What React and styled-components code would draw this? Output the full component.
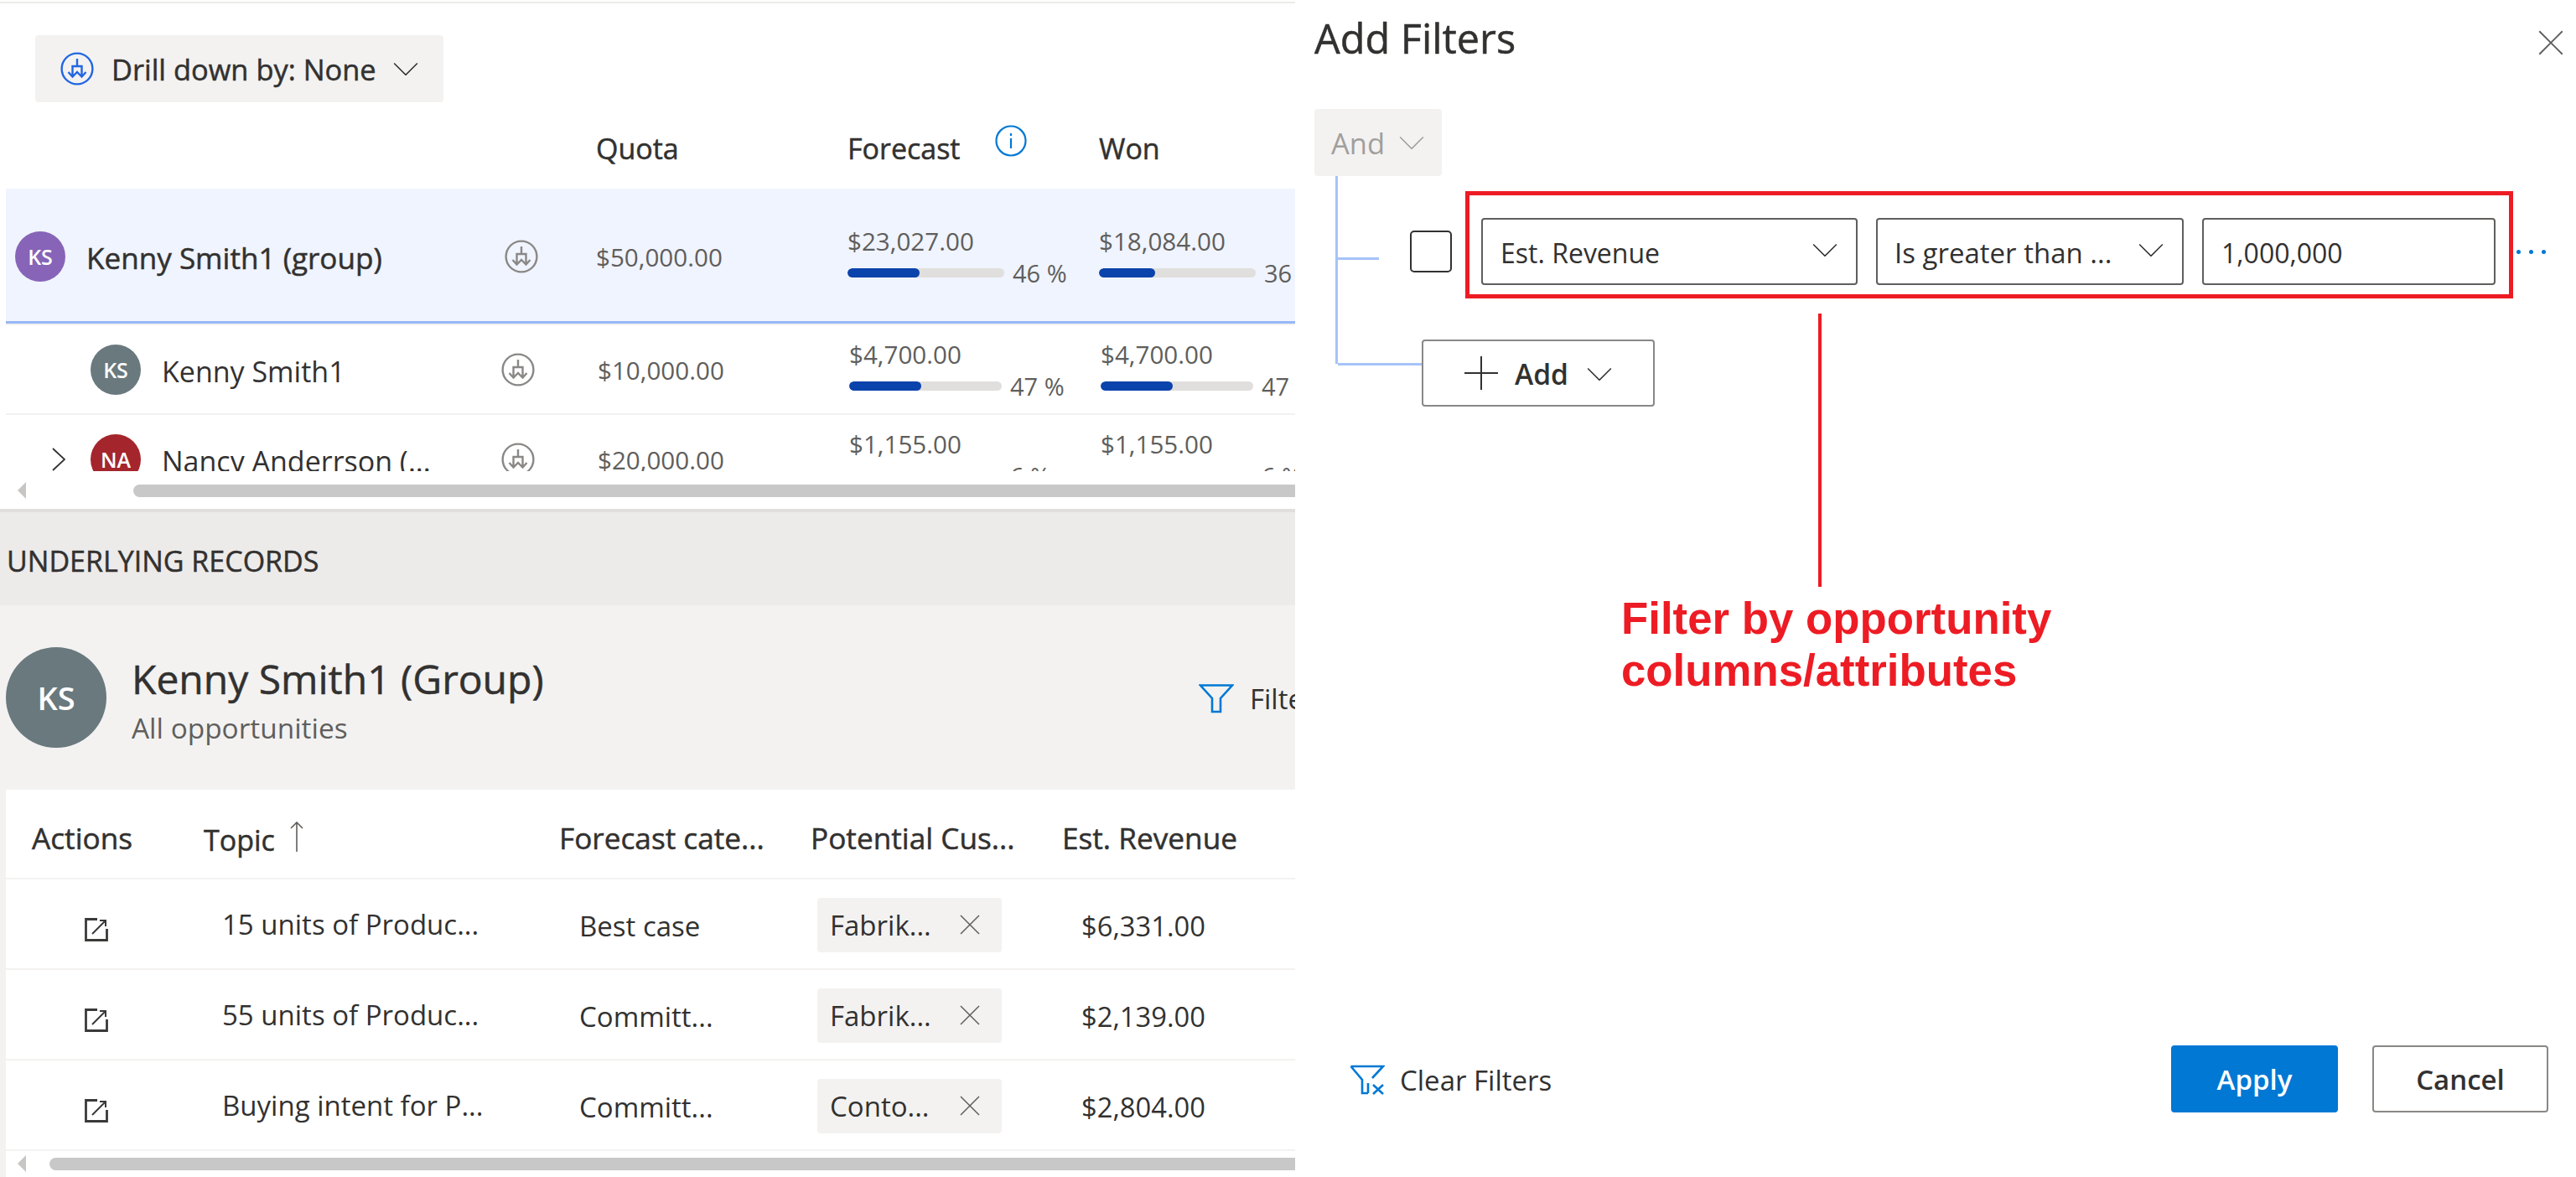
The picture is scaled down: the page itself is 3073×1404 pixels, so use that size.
import React from "react";
import styled, { createGlobalStyle, css } from "styled-components";

const medium = css`
  -webkit-text-stroke: 0.5px currentColor;
`;

const Global = createGlobalStyle`
  html, body { margin: 0; padding: 0; width: 3073px; height: 1404px; overflow: hidden; background: #fff; }
  body { font-family: "Open Sans", "Noto Sans", sans-serif; color: #323130; }
  * { box-sizing: border-box; }
`;

const Page = styled.div`
  display: grid;
  grid-template-columns: 1545px 1528px;
  width: 3073px;
  height: 1404px;
  overflow: hidden;
`;

const LeftPane = styled.div`
  display: flex;
  flex-direction: column;
  height: 1404px;
  overflow: hidden;
  padding-top: 2px;
`;

const Toolbar = styled.div`
  border-top: 2px solid #edebe9;
  height: 223px;
  flex: none;
  padding: 38px 0 0 42px;
`;

const DrillButton = styled.div`
  display: inline-flex;
  align-items: center;
  width: 487px;
  height: 80px;
  background: #f3f2f1;
  border-radius: 4px;
  padding-left: 30px;
  font-size: 34.4px;
  ${medium}
  svg.drill { margin-right: 21px; flex: none; }
  svg.chev { margin-left: 20px; flex: none; }
`;

const ColumnHeader = styled.div`
  display: grid;
  grid-template-columns: 704px 300px 300px 234px;
  margin: 35px 0 0 -35px;
  font-size: 34px;
  line-height: 40px;
  ${medium}
`;

const HeaderCell = styled.div`
  display: flex;
  align-items: flex-start;
  gap: 41px;
`;

const RowsViewport = styled.div`
  height: 337px;
  flex: none;
  overflow: hidden;
  margin-left: 7px;
`;

const TreeRow = styled.div`
  display: grid;
  grid-template-columns: ${(p) => (p.$group ? "704px 300px 300px 234px" : "706px 300px 300px 232px")};
  height: ${(p) => (p.$group ? "163px" : "107px")};
  align-items: center;
  background: ${(p) => (p.$group ? "#f0f4fe" : "#fff")};
  border-bottom: 2px solid #f3f2f1;
  ${(p) => p.$group && "box-shadow: inset 0 -3px 0 #97b8f6;"}
  overflow: hidden;
  flex: none;
`;

const NameCell = styled.div`
  display: flex;
  align-items: center;
  padding-left: ${(p) => p.$indent}px;
  height: 100%;
  svg.tree { margin-right: 30px; flex: none; }
`;

const Avatar = styled.div`
  flex: none;
  width: ${(p) => p.$size || 60}px;
  height: ${(p) => p.$size || 60}px;
  border-radius: 50%;
  background: ${(p) => p.$color};
  color: #fff;
  display: flex;
  align-items: center;
  justify-content: center;
  font-size: ${(p) => p.$font || 25}px;
  font-weight: 600;
`;

const Name = styled.div`
  margin-left: 25px;
  width: ${(p) => p.$width}px;
  font-size: ${(p) => (p.$strong ? 35.1 : 34)}px;
  ${(p) => p.$strong && medium}
  white-space: nowrap;
  flex: none;
  padding-top: ${(p) => (p.$strong ? 2 : 4)}px;
`;

const Money = styled.div`
  font-size: 29.6px;
  line-height: 40px;
  color: #605e5c;
  white-space: nowrap;
  padding-top: ${(p) => p.$nudge || 0}px;
`;

const ProgressCell = styled.div`
  display: flex;
  flex-direction: column;
  white-space: nowrap;
`;

const ProgressLine = styled.div`
  display: flex;
  align-items: center;
  gap: 10px;
  height: 36px;
  font-size: 29px;
  color: #605e5c;
`;

const Track = styled.div`
  width: ${(p) => p.$width}px;
  height: 11px;
  border-radius: 6px;
  background: #e1dfdd;
  overflow: hidden;
  flex: none;
`;

const Fill = styled.div`
  height: 100%;
  border-radius: 6px;
  background: #0a43ab;
`;

const ScrollRow = styled.div`
  display: flex;
  align-items: center;
  flex: none;
  height: 20px;
  margin-top: ${(p) => p.$top}px;
  padding-left: ${(p) => p.$left}px;
`;

const ScrollArrow = styled.div`
  width: 0;
  height: 0;
  border-top: 10px solid transparent;
  border-bottom: 10px solid transparent;
  border-right: 10px solid #c8c6c4;
  flex: none;
`;

const ScrollThumb = styled.div`
  margin-left: ${(p) => p.$offset}px;
  flex: 1;
  height: 15px;
  background: #c8c8c8;
  border-radius: 8px 0 0 8px;
`;

const SectionBar = styled.div`
  flex: none;
  margin-top: 12px;
  height: 115px;
  border-top: 4px solid #e1dfdd;
  background: #edebe9;
  display: flex;
  align-items: center;
  padding: 5px 0 0 8px;
  font-size: 34px;
  ${medium}
`;

const Summary = styled.div`
  flex: none;
  height: 220px;
  background: #f3f2f1;
  display: grid;
  grid-template-columns: 120px 1272px 200px;
  column-gap: 31px;
  align-items: center;
  padding-left: 7px;
  overflow: hidden;
`;

const SummaryTitle = styled.div`
  font-size: 48px;
  line-height: 60px;
  margin: 4px 0 0 -1px;
  ${medium}
`;

const SummarySub = styled.div`
  font-size: 33.4px;
  color: #605e5c;
  line-height: 42px;
  margin: 7px 0 0 -1px;
`;

const FilterLink = styled.div`
  display: flex;
  align-items: center;
  gap: 19px;
  font-size: 33px;
  margin-left: -31px;
  margin-top: 2px;
`;

const Card = styled.div`
  flex: 1;
  display: flex;
  flex-direction: column;
  background: #fff;
  margin-left: 7px;
  box-shadow: -7px 0 0 #f3f2f1;
`;

const RecordGrid = styled.div`
  display: grid;
  grid-template-columns: 205px 424px 300px 300px 1fr;
  padding-left: 31px;
  height: ${(p) => p.$height}px;
  border-bottom: 2px solid #f3f2f1;
  align-items: center;
  flex: none;
`;

const RecordHead = styled.div`
  font-size: ${(p) => p.$size || 35.2}px;
  white-space: nowrap;
  display: flex;
  align-items: center;
  margin-top: ${(p) => p.$top || 9}px;
  ${medium}
  svg { margin: -8px 0 0 18px; -webkit-text-stroke: 0; }
`;

const RecordCell = styled.div`
  padding-left: ${(p) => p.$left}px;
  font-size: ${(p) => p.$size || 33}px;
  white-space: nowrap;
  margin-top: ${(p) => p.$top || 0}px;
  display: flex;
  align-items: center;
`;

const Tag = styled.div`
  width: 220px;
  height: 65px;
  background: #f3f2f1;
  border-radius: 4px;
  display: flex;
  align-items: center;
  padding-left: 15px;
  font-size: 33px;
  margin-top: 2px;
  svg { margin-left: auto; margin-right: 26px; }
`;

const Panel = styled.div`
  position: relative;
  display: flex;
  flex-direction: column;
  padding-left: 23px;
  height: 1404px;
`;

const PanelHead = styled.div`
  display: flex;
  justify-content: space-between;
  align-items: center;
  height: 90px;
  padding-right: 15px;
  flex: none;
  svg { margin-top: 11px; }
`;

const PanelTitle = styled.div`
  font-size: 48.6px;
  ${medium}
`;

const AndButton = styled.div`
  margin-top: 40px;
  width: 152px;
  height: 80px;
  background: #f3f2f1;
  border-radius: 4px;
  display: flex;
  align-items: center;
  padding-left: 20px;
  gap: 17px;
  font-size: 34.5px;
  color: #a19f9d;
  flex: none;
`;

const Tree = styled.div`
  margin-left: 25px;
  height: 224px;
  border-left: 3px solid #a6c3f8;
  display: flex;
  flex-direction: column;
  flex: none;
`;

const ConditionRow = styled.div`
  display: flex;
  align-items: center;
  margin-top: 18px;
  flex: none;
`;

const Branch = styled.div`
  width: ${(p) => p.$width}px;
  height: 3px;
  background: #a6c3f8;
  flex: none;
  align-self: flex-start;
  margin-top: ${(p) => p.$top}px;
`;

const CheckBox = styled.div`
  width: 50px;
  height: 50px;
  margin: 16px 16px 0 37px;
  border: 2.5px solid #323130;
  border-radius: 5px;
  flex: none;
`;

const RedFrame = styled.div`
  width: 1250px;
  height: 128px;
  border: 5px solid #ed1c24;
  display: flex;
  gap: 22px;
  padding: 27px 0 0 14px;
  flex: none;
`;

const Field = styled.div`
  width: ${(p) => p.$width}px;
  height: 80px;
  border: 2px solid #605e5c;
  border-radius: 4px;
  display: flex;
  align-items: center;
  justify-content: space-between;
  padding: 2px 22px 0 ${(p) => p.$left || 21}px;
  font-size: ${(p) => p.$size || 32}px;
  white-space: nowrap;
  flex: none;
  svg { margin-top: -6px; }
`;

const Dots = styled.div`
  display: flex;
  gap: 10px;
  margin: 16px 0 0 4px;
  flex: none;
`;

const Dot = styled.span`
  width: 5px;
  height: 5px;
  border-radius: 50%;
  background: #0078d4;
`;

const AddRow = styled.div`
  display: flex;
  margin-top: 49px;
  flex: none;
`;

const AddButton = styled.div`
  width: 278px;
  height: 80px;
  border: 2px solid #8a8886;
  border-radius: 4px;
  display: flex;
  align-items: center;
  padding: 2px 0 0 49px;
  font-size: 33.6px;
  font-weight: 600;
  flex: none;
  svg.chev { margin-left: 22px; }
  svg.plus { margin-right: 20px; margin-top: -2px; }
`;

const Footer = styled.div`
  margin-top: auto;
  margin-bottom: 77px;
  display: flex;
  align-items: center;
  padding: 0 33px 0 42px;
  flex: none;
`;

const ClearFilters = styled.div`
  display: flex;
  align-items: center;
  gap: 18px;
  font-size: 33px;
  margin-right: auto;
  padding-top: 2px;
`;

const ActionButton = styled.div`
  height: 80px;
  width: ${(p) => p.$width}px;
  display: flex;
  align-items: center;
  justify-content: center;
  border-radius: 4px;
  font-size: 33px;
  font-weight: 600;
  margin-left: ${(p) => p.$gap || 0}px;
  background: ${(p) => (p.$primary ? "#0078d4" : "#fff")};
  color: ${(p) => (p.$primary ? "#fff" : "#323130")};
  border: ${(p) => (p.$primary ? "none" : "2px solid #8a8886")};
`;

const Callout = styled.div`
  position: absolute;
  left: 389px;
  top: 374px;
  display: flex;
  flex-direction: column;
`;

const CalloutLine = styled.div`
  width: 4px;
  height: 326px;
  margin-left: 235px;
  background: #ed1c24;
`;

const CalloutText = styled.div`
  font-family: "Liberation Sans", Arial, sans-serif;
  font-weight: 700;
  font-size: 52.8px;
  line-height: 62px;
  color: #ed1c24;
  white-space: nowrap;
  margin-top: 7px;
`;

const Chevron = ({ size = 30, color = "#323130", className = "chev" }) => (
  <svg className={className} width={size} height={size * 0.56} viewBox="0 0 30 17" fill="none">
    <path d="M1 1.5 L15 15.5 L29 1.5" stroke={color} strokeWidth="1.6" />
  </svg>
);

const DrillIcon = ({ color = "#2266e3", size = 40, className = "drill" }) => (
  <svg className={className} width={size} height={size} viewBox="0 0 40 40" fill="none" stroke={color} strokeWidth="2.4">
    <circle cx="20" cy="20" r="18.4" />
    <path d="M20 8 V17 M14.5 29 V17 H25.5 V29 M9.5 24 L14.5 29.5 L20 24 L25.5 29.5 L30.5 24" strokeWidth="2.4" />
  </svg>
);

const InfoIcon = () => (
  <svg width="38" height="38" viewBox="0 0 38 38" fill="none" stroke="#0078d4" strokeWidth="2.2" style={{ marginTop: -8 }}>
    <circle cx="19" cy="19" r="17.5" />
    <path d="M19 16 V28 M19 10 V13" />
  </svg>
);

const FunnelIcon = () => (
  <svg width="42" height="36" viewBox="0 0 42 36" fill="none" stroke="#0078d4" strokeWidth="2.6">
    <path d="M2 2.5 H40 L26 18 V34 H16 V18 Z" />
  </svg>
);

const ClearFunnelIcon = () => (
  <svg width="42" height="36" viewBox="0 0 42 36" fill="none" stroke="#0078d4" strokeWidth="2.6">
    <path d="M1.5 2 H40 L27 16 M22 34 H15 V18 L1.5 2 M22 34 V22" />
    <path d="M28 24 L40 35 M40 24 L28 35" />
  </svg>
);

const OpenIcon = () => (
  <svg width="28" height="28" viewBox="0 0 28 28" fill="none" stroke="#3b3a39" strokeWidth="2.8">
    <path d="M15 1.5 H1.5 V26.5 H26.5 V13" />
    <path d="M9 19 L24 4 M18 3 H25 V10" strokeWidth="2" />
  </svg>
);

const CloseIcon = ({ size = 24, color = "#605e5c" }) => (
  <svg width={size} height={size} viewBox="0 0 24 24" fill="none" stroke={color} strokeWidth={1.5}>
    <path d="M1 1 L23 23 M23 1 L1 23" />
  </svg>
);

const SubChevron = () => (
  <svg className="tree" width="16" height="28" viewBox="0 0 16 28" fill="none" stroke="#323130" strokeWidth="1.8">
    <path d="M1 1 L15 14 L1 27" />
  </svg>
);

const Progress = ({ amount, fill, width, label }) => (
  <ProgressCell>
    <Money>{amount}</Money>
    <ProgressLine>
      <Track $width={width}>
        <Fill style={{ width: `${fill}%` }} />
      </Track>
      {label}
    </ProgressLine>
  </ProgressCell>
);

const records = [
  { topic: "15 units of Produc...", cat: "Best case", tag: "Fabrik...", rev: "$6,331.00" },
  { topic: "55 units of Produc...", cat: "Committ...", tag: "Fabrik...", rev: "$2,139.00" },
  { topic: "Buying intent for P...", cat: "Committ...", tag: "Conto...", rev: "$2,804.00" },
];

export default function App() {
  return (
    <Page>
      <Global />
      <LeftPane>
        <Toolbar>
          <DrillButton>
            <DrillIcon />
            Drill down by: None
            <Chevron />
          </DrillButton>
          <ColumnHeader>
            <div />
            <div>Quota</div>
            <HeaderCell>
              Forecast <InfoIcon />
            </HeaderCell>
            <div>Won</div>
          </ColumnHeader>
        </Toolbar>
        <RowsViewport>
          <TreeRow $group>
            <NameCell $indent={11}>
              <Avatar $color="#8764b8">KS</Avatar>
              <Name $strong $width={499}>Kenny Smith1 (group)</Name>
              <DrillIcon color="#8a8886" className="tree" />
            </NameCell>
            <Money $nudge={3}>$50,000.00</Money>
            <Progress amount="$23,027.00" fill={46} width={187} label="46 %" />
            <Progress amount="$18,084.00" fill={36} width={187} label="36 %" />
          </TreeRow>
          <TreeRow>
            <NameCell $indent={101}>
              <Avatar $color="#69797e">KS</Avatar>
              <Name $width={405}>Kenny Smith1</Name>
              <DrillIcon color="#8a8886" className="tree" />
            </NameCell>
            <Money $nudge={3}>$10,000.00</Money>
            <Progress amount="$4,700.00" fill={47} width={182} label="47 %" />
            <Progress amount="$4,700.00" fill={47} width={182} label="47 %" />
          </TreeRow>
          <TreeRow>
            <NameCell $indent={55}>
              <SubChevron />
              <Avatar $color="#a4262c">NA</Avatar>
              <Name $width={405}>Nancy Anderrson (...</Name>
              <DrillIcon color="#8a8886" className="tree" />
            </NameCell>
            <Money $nudge={3}>$20,000.00</Money>
            <Progress amount="$1,155.00" fill={6} width={182} label="6 %" />
            <Progress amount="$1,155.00" fill={6} width={182} label="6 %" />
          </TreeRow>
        </RowsViewport>
        <ScrollRow $top={13} $left={21}>
          <ScrollArrow />
          <ScrollThumb $offset={128} />
        </ScrollRow>
        <SectionBar>UNDERLYING RECORDS</SectionBar>
        <Summary>
          <Avatar $size={120} $color="#69797e" $font={38}>KS</Avatar>
          <div>
            <SummaryTitle>Kenny Smith1 (Group)</SummaryTitle>
            <SummarySub>All opportunities</SummarySub>
          </div>
          <FilterLink>
            <FunnelIcon />
            Filter
          </FilterLink>
        </Summary>
        <Card>
          <RecordGrid $height={107}>
            <RecordHead>Actions</RecordHead>
            <RecordHead $top={14} $size={34}>
              Topic
              <svg width="16" height="36" viewBox="0 0 16 36" fill="none" stroke="#605e5c" strokeWidth="1.6">
                <path d="M8 1 V36 M1 8 L8 1 L15 8" />
              </svg>
            </RecordHead>
            <RecordHead>Forecast cate...</RecordHead>
            <RecordHead>Potential Cus...</RecordHead>
            <RecordHead>Est. Revenue</RecordHead>
          </RecordGrid>
          {records.map((r) => (
            <RecordGrid $height={108} key={r.rev}>
              <RecordCell $left={63} $top={14}><OpenIcon /></RecordCell>
              <RecordCell $left={22}>{r.topic}</RecordCell>
              <RecordCell $left={24} $top={5}>{r.cat}</RecordCell>
              <RecordCell $left={8}>
                <Tag>
                  {r.tag}
                  <CloseIcon />
                </Tag>
              </RecordCell>
              <RecordCell $left={23} $top={5} $size={32.7}>{r.rev}</RecordCell>
            </RecordGrid>
          ))}
          <ScrollRow $top={5} $left={14}>
            <ScrollArrow />
            <ScrollThumb $offset={28} />
          </ScrollRow>
        </Card>
      </LeftPane>
      <Panel>
        <PanelHead>
          <PanelTitle>Add Filters</PanelTitle>
          <CloseIcon size={30} color="#605e5c" />
        </PanelHead>
        <AndButton>
          And
          <Chevron color="#a19f9d" />
        </AndButton>
        <Tree>
          <ConditionRow>
            <Branch $width={49} $top={79} />
            <CheckBox />
            <RedFrame>
              <Field $width={449}>
                Est. Revenue
                <Chevron />
              </Field>
              <Field $width={367} $size={33} $left={20}>
                Is greater than ...
                <Chevron />
              </Field>
              <Field $width={350}>1,000,000</Field>
            </RedFrame>
            <Dots>
              <Dot />
              <Dot />
              <Dot />
            </Dots>
          </ConditionRow>
          <AddRow>
            <Branch $width={100} $top={28} />
            <AddButton>
              <svg className="plus" width="40" height="40" viewBox="0 0 40 40" fill="none" stroke="#323130" strokeWidth="2">
                <path d="M20 0 V40 M0 20 H40" />
              </svg>
              Add
              <Chevron />
            </AddButton>
          </AddRow>
        </Tree>
        <Callout>
          <CalloutLine />
          <CalloutText>
            Filter by opportunity
            <br />
            columns/attributes
          </CalloutText>
        </Callout>
        <Footer>
          <ClearFilters>
            <ClearFunnelIcon />
            Clear Filters
          </ClearFilters>
          <ActionButton $primary $width={199}>Apply</ActionButton>
          <ActionButton $width={210} $gap={41}>Cancel</ActionButton>
        </Footer>
      </Panel>
    </Page>
  );
}
